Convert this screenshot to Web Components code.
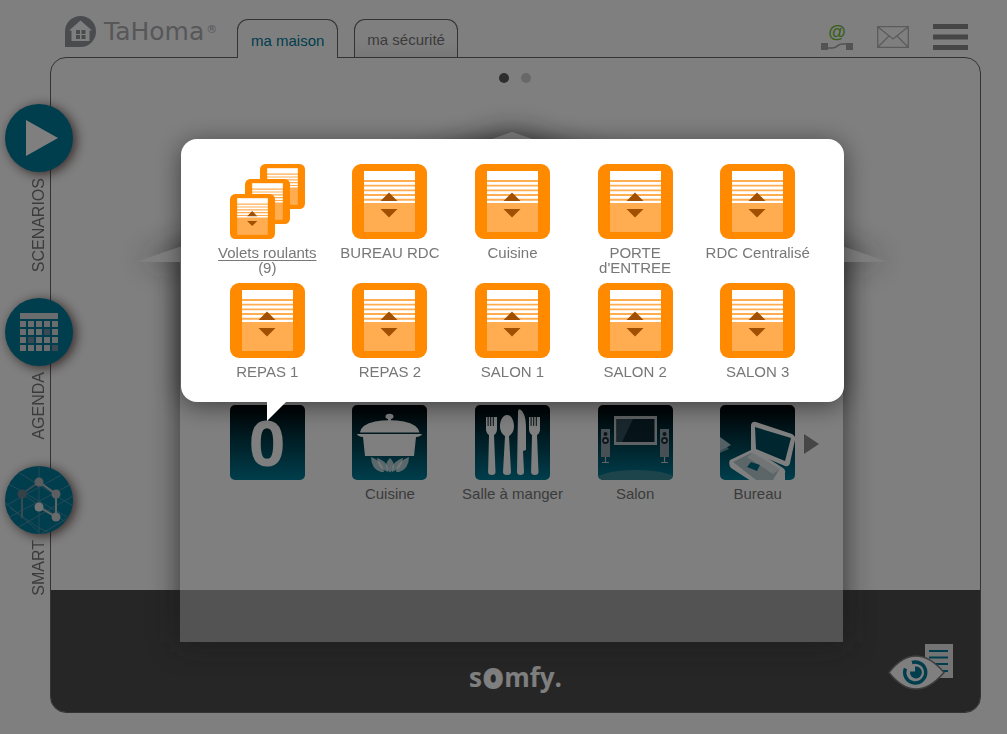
<!DOCTYPE html>
<html lang="fr">
<head>
<meta charset="utf-8">
<meta name="viewport" content="width=device-width, initial-scale=1">
<title>TaHoma</title>
<style>
  body {
    margin: 0;
    background: #FFFFFF;
    color: #777777;
    font-family: "Liberation Sans", Arial, sans-serif;
    font-size: 15px;
  }
</style>
</head>
<body>
<tahoma-app>
  <tahoma-header slot="header">
    <tahoma-tab active>ma maison</tahoma-tab>
    <tahoma-tab>ma sécurité</tahoma-tab>
  </tahoma-header>

  <side-item slot="side" icon="play">SCENARIOS</side-item>
  <side-item slot="side" icon="agenda">AGENDA</side-item>
  <side-item slot="side" icon="smart">SMART</side-item>

  <house-view slot="stage">
    <icon-tile icon="zero"></icon-tile>
    <icon-tile icon="pot">Cuisine</icon-tile>
    <icon-tile icon="cutlery">Salle à manger</icon-tile>
    <icon-tile icon="tv">Salon</icon-tile>
    <icon-tile icon="laptop">Bureau</icon-tile>
  </house-view>

  <tahoma-footer slot="footer"></tahoma-footer>
</tahoma-app>

<device-popup>
  <icon-tile icon="group"><u>Volets roulants</u> (9)</icon-tile>
  <icon-tile icon="shutter">BUREAU RDC</icon-tile>
  <icon-tile icon="shutter">Cuisine</icon-tile>
  <icon-tile icon="shutter">PORTE d'ENTREE</icon-tile>
  <icon-tile icon="shutter">RDC Centralisé</icon-tile>
  <icon-tile icon="shutter">REPAS 1</icon-tile>
  <icon-tile icon="shutter">REPAS 2</icon-tile>
  <icon-tile icon="shutter">SALON 1</icon-tile>
  <icon-tile icon="shutter">SALON 2</icon-tile>
  <icon-tile icon="shutter">SALON 3</icon-tile>
</device-popup>

<script>
const resetButton = `
  button {
    margin: 0;
    padding: 0;
    border: 0;
    background: none;
    color: inherit;
    font: inherit;
    cursor: pointer;
  }
  svg {
    display: block;
  }
`;

const shutter = `
  <rect width="75" height="75" rx="9" fill="#FF8A00"/>
  <rect x="12" y="7" width="51" height="61" fill="#FFAD50"/>
  <path fill="#FFFFFF" d="M12 7h51v9H12zM12 18h51v2.8H12zM12 22.6h51v2.8H12zM12 27.3h51V30H12zM12 32h51v2.8H12zM12 36.7h51V39H12z"/>
  <path fill="#A05000" d="M37 28.5l8.5 8.5h-17zM28.500 45h17L37 53.500z"/>
`;

const roomBackground = `
  <defs>
    <linearGradient id="bg" x1="0" y1="0" x2="0" y2="1">
      <stop offset="0" stop-color="#000406"/>
      <stop offset=".45" stop-color="#003A48"/>
      <stop offset="1" stop-color="#007C98"/>
    </linearGradient>
    <clipPath id="tile"><rect width="75" height="75" rx="5"/></clipPath>
  </defs>
  <rect width="75" height="75" rx="5" fill="url(#bg)"/>
`;

const fork = `
  <path d="M11 12h1.600v9h1V12h1.600v9h1V12h1.600v9h1V12H22v12q0 4-3 6l1.500 37q0 3-3.700 3t-3.700-3L14 30q-3-2-3-6z"/>
`;

const speaker = `
  <path fill="#8FA0AA" d="M3 24h9v28H3z"/>
  <circle cx="7.500" cy="29" r="2" fill="#1C2D36"/>
  <circle cx="7.500" cy="35.500" r="3.400" fill="#1C2D36"/>
  <circle cx="7.500" cy="35.500" r="1.600" fill="#B8C4CA"/>
  <path stroke="#C0C8CC" stroke-width="1.200" d="M7.500 52v5M4 57.500h7"/>
`;

const tileIcons = {
  shutter,
  group: `
    <g transform="translate(30 0) scale(.6)">${shutter}</g>
    <g transform="translate(15 15) scale(.6)">${shutter}</g>
    <g transform="translate(0 30) scale(.6)">${shutter}</g>
  `,
  zero: `
    ${roomBackground}
    <text x="37" y="61" text-anchor="middle" font-family="Open Sans, sans-serif" font-weight="700" font-size="63" fill="#FFFFFF">0</text>
  `,
  pot: `
    ${roomBackground}
    <g fill="#FFFFFF">
      <ellipse cx="37.500" cy="11.500" rx="4" ry="2.800"/>
      <path d="M36 13h3v3h-3z"/>
      <path d="M8 27.500q1-8 15-11 14.500-2.500 29 0 14 3 15.500 11z"/>
      <path d="M5 29h65q-1 2.500-6 3l-2 19H13l-2-19q-5-.5-6-3z"/>
    </g>
    <g fill="#FFFFFF" fill-opacity=".7">
      <path d="M19 52q0 12 10 15h3q-1-11-13-15z"/>
      <path d="M57 52q0 12-10 15h-3q1-11 13-15z"/>
      <path d="M25 53q0 10 11 14 1-10-11-14z"/>
      <path d="M51 53q0 10-11 14-1-10 11-14z"/>
      <path d="M38 53q-8 8 0 14.500 8-6.500 0-14.500z"/>
    </g>
  `,
  cutlery: `
    ${roomBackground}
    <g fill="#FFFFFF">
      ${fork}
      <path d="M32 10c5 0 7 7 7 11 0 5-2 8-5 10l2 36q0 3-4 3t-4-3l2-36c-3-2-5-5-5-10 0-4 2-11 7-11z"/>
      <path d="M43 7q0-4 3-2c4 4 5 10 5 18v22l-3 1 1 21q0 3-3.500 3T42 67z"/>
      <g transform="translate(43 0)">${fork}</g>
    </g>
  `,
  tv: `
    ${roomBackground}
    <g clip-path="url(#tile)">
      <ellipse cx="38" cy="76" rx="42" ry="11" fill="#3A8797"/>
      <path fill="#BFC5C8" d="M16 11h43v29H16z"/>
      <path fill="#0C2630" d="M18.500 14h38v23h-38z"/>
      <path fill="#33505C" d="M18.500 14H35L24 37h-5.500z"/>
      ${speaker}
      <g transform="translate(59 0)">${speaker}</g>
    </g>
  `,
  laptop: `
    ${roomBackground}
    <g clip-path="url(#tile)">
      <path fill="#6B99A5" d="M0 35l9 9L0 48z"/>
      <path fill="#A9C2C8" d="M0 32l11 8-11 6z"/>
      <path fill="#FFFFFF" d="M10 55l21-10q2-1 4 0l28 18q3 2 2 5v8H31L11 63q-3-4-1-8z"/>
      <path fill="#B9CDD2" d="M13 57l18-9 28 17-6 10H36z"/>
      <path fill="#E3EAEC" d="M33 48l27 16-7 5-26-17z"/>
      <path fill="#006E86" d="M31 57l9 3-3 6-10-4z"/>
      <path fill="#FFFFFF" d="M31 20q1-4 5-3l36 12q4 2 3 6l-5 23q-1 4-5 3L34 48q-3-1-3-4z"/>
      <path fill="#004D5E" d="M35 22l1 22 29 12 6-23z"/>
    </g>
  `,
};

const calendarCells = [0, 1, 2, 3].map(row => [0, 1, 2, 3, 4].map((col) => {
  const faded = ['1-3', '2-1', '3-4'].includes(`${row}-${col}`);
  return `<rect x="${15 + col * 8}" y="${23 + row * 8}" width="6" height="6" fill="${faded ? '#7593AD' : '#D5D8DA'}"/>`;
}).join('')).join('');

const sideIcons = {
  play: '<path fill="#FFFFFF" d="M21 16l32 18-32 18z"/>',
  agenda: `<path fill="#D5D8DA" d="M15 15h38v6H15z"/>${calendarCells}`,
  smart: `
    <g fill="none" stroke="#4A92AA" stroke-width="1">
      <path d="M34 0v68M0 40l67-37M3 52l65-35M12 62l56-32M36 68l30-18M2 17l60 34M13 6l55 34M0 36l34 30M17 28l44 28M5 42l29 20 14 6"/>
    </g>
    <g fill="none" stroke-width="2">
      <path stroke="#7593A5" d="M17 52V28l17-12"/>
      <path stroke="#C5C8CA" d="M34 16l17 12v23L34 41"/>
    </g>
    <circle cx="17" cy="28" r="4.500" fill="#6E8490"/>
    <circle cx="34" cy="16" r="4.500" fill="#B0B8BE"/>
    <circle cx="51" cy="28" r="4.500" fill="#B8BEC2"/>
    <circle cx="51" cy="51" r="4.500" fill="#D0D4D6"/>
    <circle cx="34" cy="41" r="4.500" fill="#E4E6E8"/>
  `,
};

class BaseElement extends HTMLElement {
  constructor() {
    super();
    this.attachShadow({ mode: 'open' });
  }

  connectedCallback() {
    const template = document.createElement('template');
    template.innerHTML = this.render();
    this.shadowRoot.replaceChildren(template.content.cloneNode(true));
  }
}

class TahomaApp extends BaseElement {
  render() {
    return `
      <style>
        :host {
          display: flex;
          flex-direction: column;
          min-height: 100vh;
          box-sizing: border-box;
          padding-bottom: 21px;
        }
        .content {
          display: grid;
          grid-template-columns: 50px 1fr;
          flex: 1;
          padding-right: 26px;
        }
        .side {
          display: flex;
          flex-direction: column;
          gap: 26px;
          z-index: 1;
          padding: 47px 0 0 5px;
        }
        .frame {
          display: flex;
          flex-direction: column;
          min-width: 0;
          border: 1px solid #666666;
          border-radius: 16px;
        }
        .stage {
          display: flex;
          flex-direction: column;
          flex: 1;
          padding: 15px 8px 0 0;
        }
        .dots {
          display: flex;
          justify-content: center;
          gap: 12px;
          margin: 0 0 49px 7px;
        }
        .dot {
          width: 10px;
          height: 10px;
          border-radius: 50%;
          background: #D0D0D0;
        }
        .dot--current {
          background: #5A5A5A;
        }
      </style>
      <slot name="header"></slot>
      <div class="content">
        <nav class="side"><slot name="side"></slot></nav>
        <main class="frame">
          <div class="stage">
            <div class="dots">
              <span class="dot dot--current"></span>
              <span class="dot"></span>
            </div>
            <slot name="stage"></slot>
          </div>
          <slot name="footer"></slot>
        </main>
      </div>
    `;
  }
}

class TahomaHeader extends BaseElement {
  render() {
    return `
      <style>
        ${resetButton}
        :host {
          display: flex;
          align-items: flex-end;
          height: 57px;
          padding: 0 39px 0 65px;
        }
        .logo {
          display: flex;
          gap: 8px;
          width: 172px;
          height: 41px;
          color: #AEAEB2;
          font: 25px/32px "DejaVu Sans", sans-serif;
        }
        .logo sup {
          padding-left: 2px;
          font-size: 11px;
          line-height: 11px;
          vertical-align: 7px;
        }
        .tabs {
          display: flex;
          gap: 16px;
          flex: 1;
        }
        .actions {
          display: flex;
          align-items: center;
          gap: 24px;
          height: 40px;
        }
      </style>
      <div class="logo">
        <svg width="31" height="31" viewBox="0 0 31 31">
          <path fill="#94969C" d="M0 31V15.500A15.500 15.500 0 1 1 15.500 31z"/>
          <path fill="#FFFFFF" d="M15.500 4.500L27 14.500h-2.500V25h-18V14.500H4z"/>
          <path fill="#94969C" d="M11 14h4v4h-4zM16.500 14h4v4h-4zM11 19h4v4h-4zM16.500 19h4v4h-4z"/>
        </svg>
        <span>TaHoma<sup>®</sup></span>
      </div>
      <nav class="tabs"><slot></slot></nav>
      <div class="actions">
        <button type="button" aria-label="Connexion">
          <svg width="32" height="28" viewBox="0 0 32 28">
            <text x="16" y="15" text-anchor="middle" font-family="Liberation Sans, sans-serif" font-weight="700" font-size="18" fill="#74C040">@</text>
            <path fill="#A8A4A8" d="M0 20h7v7H0zM25 20h7v7h-7z"/>
            <path fill="none" stroke="#A8A4A8" stroke-width="1.500" d="M7 25h4c6 0 5-4 10-4h4"/>
          </svg>
        </button>
        <button type="button" aria-label="Messages">
          <svg width="32" height="22" viewBox="0 0 32 22" fill="none" stroke="#B8B4B8" stroke-width="1.300">
            <path d="M.7.700h30.600v20.600H.700zM.7.700L16 13 31.300.700M.7 21.300L12 10M31.300 21.300L20 10"/>
          </svg>
        </button>
        <button type="button" aria-label="Menu">
          <svg width="35" height="26" viewBox="0 0 35 26">
            <path fill="#8C8C8C" d="M0 0h35v5H0zM0 10.500h35v5H0zM0 21h35v5H0z"/>
          </svg>
        </button>
      </div>
    `;
  }
}

class TahomaTab extends BaseElement {
  render() {
    return `
      <style>
        ${resetButton}
        :host {
          display: block;
        }
        button {
          display: block;
          height: 38px;
          padding: 2px 12px 0;
          border: 1px solid #666666;
          border-bottom: 0;
          border-radius: 11px 11px 0 0;
          background: linear-gradient(#FFFFFF 50%, #F0F0F0);
          white-space: nowrap;
        }
        :host([active]) button {
          position: relative;
          height: 39px;
          padding: 2px 13px 0;
          margin-bottom: -1px;
          background: #FFFFFF;
          color: #007C9C;
        }
      </style>
      <button type="button"><slot></slot></button>
    `;
  }
}

class SideItem extends BaseElement {
  render() {
    return `
      <style>
        ${resetButton}
        :host {
          display: block;
        }
        button {
          display: flex;
          flex-direction: column;
          align-items: center;
          gap: 6px;
          width: 68px;
        }
        svg {
          border-radius: 50%;
          background: #007C9C;
          box-shadow: 3px 2px 12px rgba(40, 10, 10, .7);
        }
        .label {
          font-size: 16px;
          line-height: 18px;
          writing-mode: vertical-rl;
          transform: rotate(180deg);
        }
      </style>
      <button type="button">
        <svg width="68" height="68" viewBox="0 0 68 68">${sideIcons[this.getAttribute('icon')]}</svg>
        <span class="label"><slot></slot></span>
      </button>
    `;
  }
}

class IconTile extends BaseElement {
  render() {
    return `
      <style>
        ${resetButton}
        :host {
          display: flex;
          justify-content: center;
          align-items: flex-start;
          height: 119px;
        }
        button {
          display: flex;
          flex-direction: column;
          align-items: center;
          gap: 6px;
          width: 110px;
        }
        svg {
          overflow: visible;
        }
        .label {
          line-height: 15px;
        }
        ::slotted(u) {
          text-underline-offset: 2px;
        }
      </style>
      <button type="button">
        <svg width="75" height="75" viewBox="0 0 75 75">${tileIcons[this.getAttribute('icon')]}</svg>
        <span class="label"><slot></slot></span>
      </button>
    `;
  }
}

class HouseView extends BaseElement {
  render() {
    const outline = 'M332 0L708 130H663V510H0V130H-44z';
    return `
      <style>
        ${resetButton}
        :host {
          display: block;
          position: relative;
          z-index: 1;
          flex: 1;
          box-sizing: border-box;
          width: 100%;
          max-width: 663px;
          min-height: 510px;
          margin: 0 auto -52px;
          padding: 273px 24px 0 26px;
        }
        .house {
          position: absolute;
          top: 0;
          left: 0;
          overflow: visible;
        }
        .rooms {
          display: grid;
          position: relative;
          grid-template-columns: repeat(5, 1fr);
        }
        .next {
          position: absolute;
          top: 29px;
          right: 0;
        }
      </style>
      <svg class="house" width="663" height="510" viewBox="0 0 663 510">
        <defs>
          <filter id="blur" filterUnits="userSpaceOnUse" x="-180" y="-120" width="1020" height="780">
            <feGaussianBlur stdDeviation="15"/>
          </filter>
          <mask id="outside" maskUnits="userSpaceOnUse" x="-180" y="-120" width="1020" height="780">
            <path fill="#FFFFFF" d="M-180-120H840V660H-180z"/>
            <path fill="#000000" d="${outline}"/>
          </mask>
        </defs>
        <g mask="url(#outside)">
          <path fill="#303030" fill-opacity=".75" filter="url(#blur)" d="${outline}"/>
        </g>
        <path fill="#FFFFFF" fill-opacity=".5" d="${outline}"/>
      </svg>
      <div class="rooms">
        <slot></slot>
        <button class="next" type="button" aria-label="Suivant">
          <svg width="15" height="20" viewBox="0 0 15 20"><path fill="#8C8C8C" d="M0 0l15 10L0 20z"/></svg>
        </button>
      </div>
    `;
  }
}

class TahomaFooter extends BaseElement {
  render() {
    return `
      <style>
        ${resetButton}
        :host {
          display: grid;
          grid-template-columns: 1fr auto 1fr;
          align-items: center;
          height: 122px;
          box-sizing: border-box;
          padding: 32px 27px 0;
          border-radius: 0 0 15px 15px;
          background: #4C4C4C;
        }
        .brand {
          grid-column: 2;
          padding-top: 20px;
          color: #FFFFFF;
          font: 700 26px/30px "Open Sans", sans-serif;
        }
        .brand span {
          padding: 0 2px;
          font: 30px/30px "DejaVu Sans", sans-serif;
          -webkit-text-stroke: 4px #FFFFFF;
        }
        button {
          justify-self: end;
        }
      </style>
      <div class="brand">s<span>o</span>mfy.</div>
      <button type="button" aria-label="Aperçu">
        <svg width="65" height="46" viewBox="0 0 65 46">
          <path fill="#E8E8E8" d="M37 0h28v34H37z"/>
          <path stroke="#007C9C" stroke-width="2" d="M41 7h19M41 13.500h19M41 20h19M50 27h10"/>
          <path fill="#FFFFFF" stroke="#7A7A7A" stroke-width="1.500" d="M1 28.500Q14 12 28 12t28 16.500Q42 45 28 45T1 28.500z"/>
          <path fill="none" stroke="#007C9C" stroke-width="3.500" d="M24 18.500a10.500 10.500 0 1 1-6.500 6"/>
          <path fill="#007C9C" d="M27 22.500a6 6 0 1 1-5 5h5z"/>
        </svg>
      </button>
    `;
  }
}

class DevicePopup extends BaseElement {
  render() {
    return `
      <style>
        :host {
          display: flex;
          justify-content: center;
          align-items: flex-start;
          position: fixed;
          inset: 0;
          z-index: 10;
          padding: 139px 33px 0 51px;
          background: rgba(0, 0, 0, .5);
        }
        .panel {
          display: grid;
          position: relative;
          grid-template-columns: repeat(5, 1fr);
          box-sizing: border-box;
          width: 100%;
          max-width: 663px;
          padding: 25px 25px 0;
          border-radius: 16px;
          background: #FFFFFF;
          box-shadow: 0 4px 26px rgba(0, 0, 0, .5);
        }
        .pointer {
          position: absolute;
          top: 100%;
          left: 86px;
          width: 19px;
          height: 19px;
          background: #FFFFFF;
          clip-path: polygon(0 0, 100% 0, 0 100%);
        }
      </style>
      <div class="panel" role="dialog" aria-label="Volets roulants">
        <slot></slot>
        <div class="pointer"></div>
      </div>
    `;
  }
}

window.customElements.define('tahoma-app', TahomaApp);
window.customElements.define('tahoma-header', TahomaHeader);
window.customElements.define('tahoma-tab', TahomaTab);
window.customElements.define('side-item', SideItem);
window.customElements.define('icon-tile', IconTile);
window.customElements.define('house-view', HouseView);
window.customElements.define('tahoma-footer', TahomaFooter);
window.customElements.define('device-popup', DevicePopup);
</script>
</body>
</html>
